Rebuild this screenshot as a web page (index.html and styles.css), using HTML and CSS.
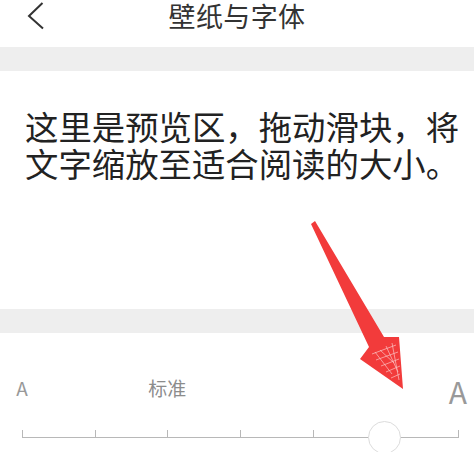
FILE: index.html
```html
<!DOCTYPE html>
<html lang="zh-CN">
<head>
<meta charset="utf-8">
<title>壁纸与字体</title>
<link rel="stylesheet" href="styles.css">
</head>
<body>
<div class="page">
  <header class="header">
    <svg class="back" width="20" height="30" viewBox="0 0 20 30"><polyline points="15.5,3 2,16 16,28.5" fill="none" stroke="#333" stroke-width="2"/></svg>
    <h1 class="title">壁纸与字体</h1>
  </header>
  <div class="band"></div>
  <section class="preview">
    <p class="preview-text">这里是预览区，拖动滑块，将<br>文字缩放至适合阅读的大小。</p>
  </section>
  <div class="band"></div>
  <section class="sizer">
    <div class="labels">
      <span class="slot"><span class="lbl small">A</span></span>
      <span class="slot"></span>
      <span class="slot"><span class="lbl std">标准</span></span>
      <span class="slot"></span>
      <span class="slot"></span>
      <span class="slot"></span>
      <span class="slot"><span class="lbl big">A</span></span>
    </div>
    <div class="track">
      <span class="tick"></span><span class="tick"></span><span class="tick"></span><span class="tick"></span><span class="tick"></span><span class="tick"></span><span class="tick"></span>
      <span class="thumb"></span>
    </div>
  </section>
  <svg class="arrow" width="474" height="452" viewBox="0 0 474 452">
    <polygon points="311,224 315,221 384,337 399,337 403,389 360,359 369,347" fill="#f23b3b"/>
    <g stroke="#fff" stroke-width="0.7" opacity="0.7">
      <line x1="372" y1="354" x2="396" y2="345"/>
      <line x1="376" y1="360" x2="398" y2="352"/>
      <line x1="381" y1="366" x2="399" y2="359"/>
      <line x1="386" y1="372" x2="400" y2="366"/>
      <line x1="391" y1="378" x2="400" y2="374"/>
      <line x1="380" y1="350" x2="394" y2="363"/>
      <line x1="386" y1="346" x2="398" y2="372"/>
      <line x1="375" y1="352" x2="392" y2="374"/>
      <line x1="392" y1="343" x2="399" y2="380"/>
    </g>
  </svg>
</div>
</body>
</html>
```
FILE: styles.css
```css
* { box-sizing: border-box; }
html, body { margin: 0; padding: 0; background: #fff; }
body {
  font-family: "Noto Sans CJK SC", "Noto Sans", sans-serif;
  width: 474px;
  height: 452px;
  overflow: hidden;
}
.page { position: relative; width: 474px; height: 452px; overflow: hidden; }
.header {
  height: 47px;
  display: flex;
  justify-content: center;
  position: relative;
}
.back { position: absolute; left: 27px; top: 0; }
.title {
  margin: 0;
  font-size: 27px;
  font-weight: 400;
  line-height: 32px;
  color: #333;
  letter-spacing: 0.4px;
}
.band { height: 24px; background: #eeeeee; }
.preview { height: 238px; padding: 36px 0 0 25px; }
.preview-text {
  margin: 0;
  font-size: 33.4px;
  line-height: 37px;
  color: #222;
}
.sizer { height: 119px; }
.labels {
  display: flex;
  justify-content: space-between;
  align-items: center;
  height: 40px;
  margin: 34px 16px 0 22px;
}
.slot { width: 0; display: flex; justify-content: center; align-items: center; }
.lbl { white-space: nowrap; color: #999; line-height: 1; }
.small { font-size: 19px; }
.std { font-size: 19px; color: #8c8c8c; }
.big { font-size: 30px; margin-top: 8px; }
.track {
  position: relative;
  display: flex;
  justify-content: space-between;
  align-items: flex-end;
  height: 8px;
  margin: 23px 15px 0 22px;
  border-bottom: 1px solid #b8b8b8;
}
.tick { width: 1px; height: 7px; background: #b8b8b8; }
.thumb {
  position: absolute;
  left: 346px;
  top: -9px;
  width: 33px;
  height: 33px;
  border-radius: 50%;
  background: #fff;
  border: 1px solid #dcdcdc;
}
.arrow { position: absolute; left: 0; top: 0; pointer-events: none; }
```
